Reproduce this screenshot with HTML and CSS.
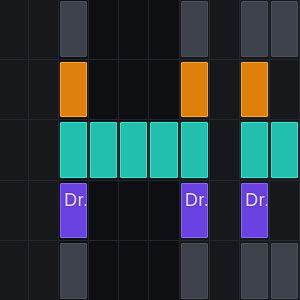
FILE: index.html
```html
<!DOCTYPE html>
<html>
<head>
  <title>Step Sequencer</title>
  <link rel="stylesheet" href="styles.css">
</head>
<body>
  <div class="sequencer">
    <!-- row: hat -->
    <div class="cell lite"></div><div class="cell lite"></div>
    <div class="cell dark"><div class="step gray"></div></div><div class="cell dark"></div><div class="cell dark"></div><div class="cell dark"></div>
    <div class="cell lite"><div class="step gray"></div></div><div class="cell lite"></div><div class="cell lite"><div class="step gray"></div></div><div class="cell lite"><div class="step gray"></div></div>
    <!-- row: snare -->
    <div class="cell lite"></div><div class="cell lite"></div>
    <div class="cell dark"><div class="step orange"></div></div><div class="cell dark"></div><div class="cell dark"></div><div class="cell dark"></div>
    <div class="cell lite"><div class="step orange"></div></div><div class="cell lite"></div><div class="cell lite"><div class="step orange"></div></div><div class="cell lite"></div>
    <!-- row: bass -->
    <div class="cell lite"></div><div class="cell lite"></div>
    <div class="cell dark"><div class="step teal"></div></div><div class="cell dark"><div class="step teal"></div></div><div class="cell dark"><div class="step teal"></div></div><div class="cell dark"><div class="step teal"></div></div>
    <div class="cell lite"><div class="step teal"></div></div><div class="cell lite"></div><div class="cell lite"><div class="step teal"></div></div><div class="cell lite"><div class="step teal"></div></div>
    <!-- row: drums -->
    <div class="cell lite"></div><div class="cell lite"></div>
    <div class="cell dark"><div class="step purple">Dr.</div></div><div class="cell dark"></div><div class="cell dark"></div><div class="cell dark"></div>
    <div class="cell lite"><div class="step purple">Dr.</div></div><div class="cell lite"></div><div class="cell lite"><div class="step purple">Dr.</div></div><div class="cell lite"></div>
    <!-- row: hat 2 -->
    <div class="cell lite"></div><div class="cell lite"></div>
    <div class="cell dark"><div class="step gray"></div></div><div class="cell dark"></div><div class="cell dark"></div><div class="cell dark"></div>
    <div class="cell lite"><div class="step gray"></div></div><div class="cell lite"></div><div class="cell lite"><div class="step gray"></div></div><div class="cell lite"><div class="step gray"></div></div>
  </div>
</body>
</html>
```
FILE: styles.css
```css
html, body {
  margin: 0;
  padding: 0;
  width: 300px;
  height: 300px;
  overflow: hidden;
  background-color: #15171b;
}
.sequencer {
  display: grid;
  grid-template-columns: repeat(10, 29.2px);
  grid-auto-rows: 59.5px;
  gap: 1px;
  margin: -1px 0 0 -1.5px;
  background-color: #24272c;
}
.cell {
  padding: 2px 1px 2px 1px;
  box-sizing: border-box;
}
.cell.lite {
  background-color: #16181c;
}
.cell.dark {
  background-color: #0e0f12;
}
.step {
  height: 100%;
  box-sizing: border-box;
  border-radius: 1px;
  border: 1px solid;
  overflow: hidden;
  white-space: nowrap;
  font-family: "Liberation Sans", Arial, sans-serif;
  font-size: 18px;
  letter-spacing: 0.6px;
  padding: 6px 0 0 3px;
  color: #ecdcec;
  text-shadow: 0 0 2px #2c1670;
}
.gray {
  background-color: #3c414c;
  border-color: #4b505b;
}
.orange {
  background-color: #e0800c;
  border-color: #f3a645;
  box-shadow: 0 0 2px rgba(240, 150, 40, 0.35);
}
.teal {
  background-color: #22bfae;
  border-color: #44e0cc;
  box-shadow: 0 0 2px rgba(60, 220, 200, 0.35);
}
.purple {
  background-color: #6a42e2;
  border-color: #8b6af2;
}
```
